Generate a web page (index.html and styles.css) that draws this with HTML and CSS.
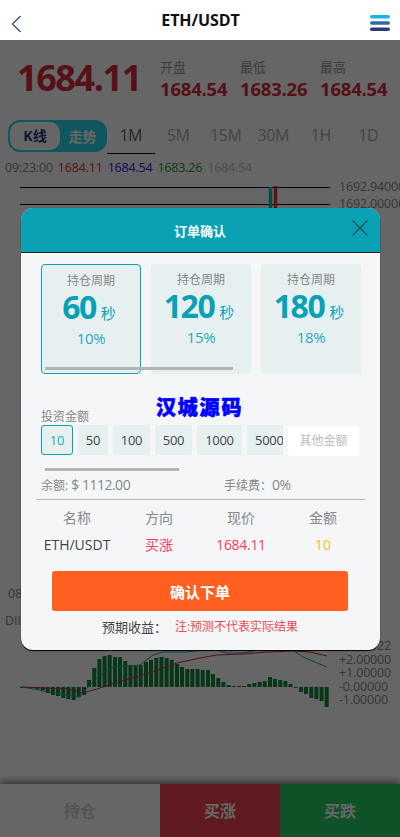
FILE: index.html
```html
<!DOCTYPE html>
<html lang="zh-CN">
<head>
<meta charset="utf-8">
<title>ETH/USDT</title>
<link rel="stylesheet" href="styles.css">
</head>
<body>
<div class="page">
  <header class="topbar">
    <svg class="back" width="12" height="18" viewBox="0 0 12 18"><path d="M9.500 1 L1.500 9 L9.500 17" fill="none" stroke="#2c4a66" stroke-width="1.200"/></svg>
    <h1 class="title">ETH/USDT</h1>
    <svg class="menu" width="20" height="16" viewBox="0 0 20 16"><rect y="0" width="20" height="3.600" rx="1.800" fill="#18b1f2"/><rect y="6.200" width="20" height="3.600" rx="1.800" fill="#2c6aa8"/><rect y="12.400" width="20" height="3.600" rx="1.800" fill="#2f3a7c"/></svg>
  </header>
  <main class="main">
    <section class="quote">
      <div class="last">1684.11</div>
      <div class="stat"><span class="stat-k">开盘</span><span class="stat-v">1684.54</span></div>
      <div class="stat"><span class="stat-k">最低</span><span class="stat-v">1683.26</span></div>
      <div class="stat"><span class="stat-k">最高</span><span class="stat-v">1684.54</span></div>
    </section>
    <nav class="tabs">
      <div class="mode"><span class="mode-on">K线</span><span class="mode-off">走势</span></div>
      <span class="tab tab-on">1M</span><span class="tab">5M</span><span class="tab">15M</span><span class="tab">30M</span><span class="tab">1H</span><span class="tab">1D</span>
    </nav>
    <div class="ohlc"><span>09:23:00</span><span class="c-red">1684.11</span><span class="c-blue">1684.54</span><span class="c-green">1683.26</span><span class="c-gray">1684.54</span></div>
    <section class="chart">
      <svg class="plot" width="400" height="568" viewBox="0 0 400 568">
        <path d="M20 7.500H330M20 24.500H330" stroke="#000" stroke-width="1"/>
        <path d="M270.500 7V60" stroke="#14b8c8" stroke-width="3.400"/>
        <path d="M275.500 6V60" stroke="#e03040" stroke-width="3.400"/>
        <g transform="translate(0 401)" fill="none">
          <path stroke="#128a3e" stroke-width="4" d="M22 106v1M27 106v1M32.300 106v1M37.500 106v2M42.700 106v3M47.800 106v6M53 106v8M58 106v9M63.300 106v11M68.400 106v12M73.600 106v13M78.700 106v10M84 106v8M89 106v-7M94.300 106v-19M99.400 106v-28M104.600 106v-31M109.700 106v-32M115 106v-30M120 106v-30M125.300 106v-26M130.400 106v-22M135.600 106v-21M140.700 106v-22M146 106v-25M151 106v-27M156.300 106v-29M161.400 106v-30M166.600 106v-29M171.700 106v-27M177 106v-23M182 106v-20M187.300 106v-18M192.400 106v-18M197.600 106v-18M202.700 106v-17M208 106v-17M213 106v-13M218.300 106v-9M223.400 106v-5M228.600 106v-2M233.700 106v-1M239 106v-1M244 106v-1M249.300 106v-3M254.400 106v-4M259.600 106v-5M264.700 106v-6M270 106v-10M275 106v-8M280.300 106v-7M285.400 106v-6M290.600 106v-3M295.700 106v1M301 106v5M306 106v7M311.300 106v11M316.400 106v12M321.600 106v14M326.700 106v20"/>
          <path stroke="#1aa3b3" stroke-width="1" d="M22 106L67 114L80 116L88 106L100 94L113 86L127 85L140 84L153 74L163 71L187 71L213 68L227 72L243 72L263 68L293 69L303 76L327 86"/>
          <path stroke="#c8283a" stroke-width="1" d="M22 106L67 108L83 112L100 107L117 101L140 95L157 89L177 82L200 77L217 74L243 73L267 71L293 70L310 71L327 75"/>
        </g>
      </svg>
      <div class="axis-top"><span>1692.94000</span><span>1692.00000</span></div>
      <div class="axis-bot"><span>+2.99922</span><span>+2.00000</span><span>+1.00000</span><span>-0.00000</span><span>-1.00000</span></div>
      <div class="chart-left"><span class="date">08</span><span class="dif">DII</span></div>
    </section>
    <footer class="actions">
      <div class="act act-pos">持仓</div>
      <div class="act act-up">买涨</div>
      <div class="act act-down">买跌</div>
    </footer>
  </main>
</div>
<div class="overlay">
  <div class="modal">
    <div class="modal-head">
      <span>订单确认</span>
      <svg class="close" width="16" height="16" viewBox="0 0 16 16"><path d="M.5.5L15.500 15.500M15.500.5L.5 15.500" stroke="#25505a" stroke-width="1.200" fill="none"/></svg>
    </div>
    <div class="periods">
      <div class="period period-on"><div class="p-k">持仓周期</div><div class="p-v"><b>60</b><i>秒</i></div><div class="p-r">10%</div></div>
      <div class="period"><div class="p-k">持仓周期</div><div class="p-v"><b>120</b><i>秒</i></div><div class="p-r">15%</div></div>
      <div class="period"><div class="p-k">持仓周期</div><div class="p-v"><b>180</b><i>秒</i></div><div class="p-r">18%</div></div>
      <span class="thumb-1"></span>
    </div>
    <div class="amount-label">投资金额<span class="watermark">汉城源码</span></div>
    <div class="amounts">
      <span class="amt amt-on">10</span><span class="amt w30">50</span><span class="amt w37">100</span><span class="amt w37">500</span><span class="amt w45">1000</span><span class="amt amt-cut">5000</span><span class="amt-other">其他金额</span>
    </div>
    <span class="thumb-2"></span>
    <div class="balance"><span class="bal">余额: <span class="num">$ 1112.00</span></span><span>手续费：<span class="num">0%</span></span></div>
    <div class="order">
      <span>名称</span><span>方向</span><span>现价</span><span>金额</span>
      <span class="o-name">ETH/USDT</span><span class="o-dir">买涨</span><span class="o-price">1684.11</span><span class="o-amt">10</span>
    </div>
    <button class="confirm">确认下单</button>
    <div class="note"><span class="note-k">预期收益：</span><span class="note-v">注:预测不代表实际结果</span></div>
  </div>
</div>
</body>
</html>
```

FILE: styles.css
```css
* { box-sizing: border-box; }
html, body { margin: 0; padding: 0; }
body {
  width: 400px;
  height: 837px;
  overflow: hidden;
  position: relative;
  background: #fff;
  font-family: "Open Sans", "Noto Sans CJK SC", sans-serif;
  color: #333;
}
.page { display: flex; flex-direction: column; height: 837px; }
.topbar {
  height: 40px;
  flex: none;
  display: flex;
  align-items: center;
  justify-content: space-between;
  padding: 0 10px 0 11px;
  background: #fff;
}
.back { margin: 8px 8px 0 0; }
.menu { margin-top: 6px; }
.title { margin: -1px 0 0; font-size: 16px; letter-spacing: -.1px; font-weight: 700; color: #111; line-height: 22px; }
.main { flex: 1; display: flex; flex-direction: column; min-height: 0; }

.quote { height: 72px; flex: none; display: flex; padding: 14px 0 0 17px; }
.last { width: 143px; font-size: 36px; font-weight: 700; letter-spacing: -1.400px; color: #d8283c; line-height: 48px; }
.stat { width: 80px; display: flex; flex-direction: column; }
.stat-k { font-size: 13px; line-height: 20px; color: #999; margin-top: 3px; }
.stat-v { font-size: 18.500px; letter-spacing: -.2px; font-weight: 700; color: #d8283c; line-height: 24px; }

.tabs { height: 34px; flex: none; display: flex; margin: 8px 0 0; padding-left: 8px; }
.mode {
  width: 99px; height: 32px; display: flex; align-items: center; border-radius: 12px;
  background: #28d8ea; padding: 2px; font-size: 14px; font-weight: 700;
}
.mode-on { width: 50px; height: 28px; line-height: 27px; text-align: center; border-radius: 10px; background: #fff; color: #2c3a7a; }
.mode-off { flex: 1; text-align: center; color: #fff; }
.tab { width: 47.500px; height: 34px; line-height: 30px; text-align: center; font-size: 16px; letter-spacing: -.4px; color: #aaa; }
.tab-on { color: #666; border-bottom: 1px solid #000; }
.ohlc { height: 26px; flex: none; display: flex; gap: 5px; padding: 5px 0 0 5px; font-size: 12.500px; letter-spacing: -.2px; line-height: 18px; color: #888; }
.c-red { color: #e03040; }
.c-blue { color: #2222dd; }
.c-green { color: #1a9a3a; }
.c-gray { color: #c0c0c0; }

.chart { flex: 1; position: relative; min-height: 0; overflow: hidden; }
.plot { position: absolute; left: 0; top: 0; }
.axis-top, .axis-bot {
  position: absolute; left: 339px; display: flex; flex-direction: column;
  font-size: 12.500px; letter-spacing: -.15px; color: #888; white-space: nowrap;
}
.axis-top { top: -1px; line-height: 16.500px; }
.axis-bot { top: 459px; line-height: 13.500px; }
.chart-left { position: absolute; left: 5px; top: 406px; font-size: 12.500px; color: #888; display: flex; flex-direction: column; gap: 11px; line-height: 16px; }
.date { margin-left: 3px; }

.actions { height: 53px; flex: none; display: flex; font-size: 16px; font-weight: 700; box-shadow: 0 -2px 8px rgba(0,0,0,.55); z-index: 1; }
.act { display: flex; align-items: center; justify-content: center; padding-bottom: 2px; }
.act-pos { width: 160px; background: #fff; color: #d0d0d0; }
.act-up { width: 120px; background: #f24150; color: #fff; }
.act-down { flex: 1; background: #26cd64; color: #fff; }

.overlay { position: absolute; left: 0; right: 0; top: 40px; bottom: 0; background: rgba(0,0,0,.6); z-index: 5; }
.modal {
  position: absolute; left: 21px; top: 168px; width: 359px; height: 442px;
  background: #f4f6f8; border-radius: 12px; overflow: hidden;
  box-shadow: 0 1px 1px #000; display: flex; flex-direction: column;
}
.modal-head {
  height: 45px; flex: none; position: relative; display: flex; align-items: center; justify-content: center;
  background: #0aa1b5; color: #fff; font-size: 13px; font-weight: 700; border-bottom: 1px solid #222; padding-right: 1px;
}
.close { position: absolute; right: 12px; top: 12px; }
.periods { position: relative; display: flex; gap: 10px; padding: 11px 0 0 20px; height: 121px; flex: none; }
.period { width: 100px; height: 110px; border-radius: 4px; background: #e7f0f1; text-align: center; color: #0aa1b5; padding-top: 8px; }
.period-on { border: 1px solid #0aa1b5; padding-top: 8px; }
.p-k { font-size: 12px; line-height: 16px; color: #888; }
.p-v { height: 34px; line-height: 34px; margin-top: 1px; padding-right: 4px; white-space: nowrap; }
.p-v b { font-size: 32px; font-weight: 700; letter-spacing: -1.500px; }
.p-v i { font-style: normal; font-size: 15px; margin-left: 5px; }
.p-r { margin-top: 4px; font-size: 15px; letter-spacing: -.3px; line-height: 20px; color: #2aa8bb; }
.thumb-1 { position: absolute; left: 24px; top: 114px; width: 188px; height: 3px; background: #b4b4b4; }
.amount-label { position: relative; margin: 35px 0 0 20px; height: 16px; line-height: 16px; font-size: 12px; color: #888; flex: none; }
.watermark { position: absolute; left: 115px; top: -13px; font-size: 20px; font-weight: 900; line-height: 24px; color: #0000ff; -webkit-text-stroke: .6px #0000ff; letter-spacing: 1.800px; white-space: nowrap; }
.amounts { display: flex; gap: 5px; padding-left: 20px; margin-top: 0; height: 31px; flex: none; }
.amt { height: 30px; line-height: 30px; font-size: 13px; letter-spacing: -.3px; color: #444; background: #e7f0f1; border-radius: 3px; text-align: center; }
.w30 { width: 30px; }
.w37 { width: 37px; }
.w45 { width: 45px; }
.amt-on { width: 32px; color: #2aa8bb; border: 1px solid #0aa1b5; line-height: 28px; }
.amt-cut { padding-left: 8px; width: 36px; overflow: hidden; text-align: left; border-radius: 3px 0 0 3px; white-space: nowrap; }
.amt-other { width: 71px; height: 30px; margin-top: 1px; line-height: 30px; font-size: 12px; background: #fff; color: #bbb; border-radius: 3px; text-align: center; }
.thumb-2 { display: block; width: 134px; height: 3px; margin: 12px 0 0 24px; background: #b4b4b4; flex: none; }
.balance { display: flex; padding-left: 20px; margin-top: 3px; height: 22px; line-height: 22px; font-size: 12px; color: #888; flex: none; }
.bal { width: 183px; }
.num { font-size: 14px; letter-spacing: -.5px; }
.order {
  margin: 3px 15px 0; padding-top: 6px; border-top: 1px solid #b8b8b8; flex: none;
  display: grid; grid-template-columns: repeat(4, 82px); grid-auto-rows: 26px; row-gap: 1px;
  font-size: 14px; line-height: 23px; color: #888; text-align: center;
}
.o-name { color: #444; }
.o-dir, .o-price { color: #f0405a; }
.o-price { letter-spacing: -.3px; }
.o-amt { color: #f8c020; }
.confirm {
  display: block; flex: none; width: 296px; height: 40px; margin: 12px 0 0 31px; padding: 0; border: 0; border-radius: 3px;
  background: #ff5f1f; color: #fff; font: 700 15px "Open Sans", "Noto Sans CJK SC", sans-serif;
}
.note { display: flex; justify-content: center; margin-top: 6px; height: 20px; line-height: 20px; font-size: 12px; flex: none; padding-right: 1px; }
.note-k { color: #444; width: 73px; font-size: 13px; white-space: nowrap; }
.note-v { color: #e84a50; }
```
